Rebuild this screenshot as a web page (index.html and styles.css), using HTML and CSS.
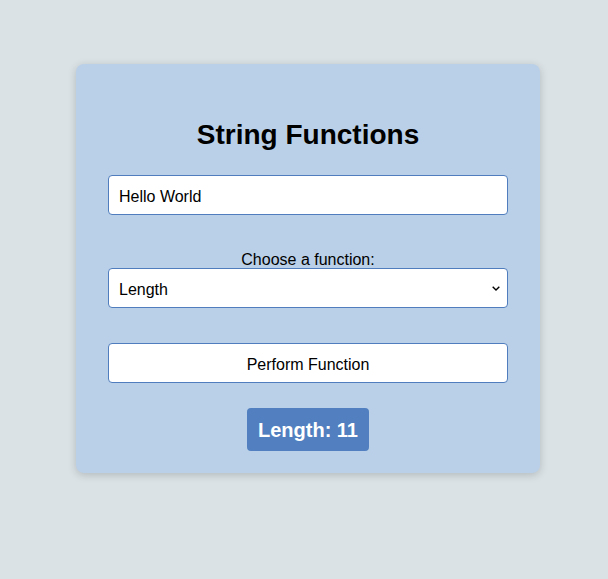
FILE: index.html
```html
<!DOCTYPE html>
<html>
<head>
<meta charset="utf-8">
<link rel="stylesheet" href="styles.css">
</head>
<body>
<div class="card">
  <h1 class="title">String Functions</h1>
  <input class="field" type="text" value="Hello World">
  <label class="label" for="fn">Choose a function:</label>
  <div class="select-wrap">
    <select class="field select" id="fn">
      <option>Length</option>
    </select>
    <svg class="chevron" width="8" height="5" viewBox="0 0 8 5"><path d="M0.7 0.7 L4 4 L7.3 0.7" fill="none" stroke="#000" stroke-width="1.4"/></svg>
  </div>
  <button class="field button">Perform Function</button>
  <div class="result">Length: 11</div>
</div>
</body>
</html>
```
FILE: styles.css
```css
html, body {
  margin: 0;
  background: #dae2e6;
}
body {
  padding: 64px 0 0 8px;
  height: 579px;
  box-sizing: border-box;
  font-family: "Liberation Sans", Arial, sans-serif;
}
.card {
  width: 464px;
  height: 409px;
  box-sizing: border-box;
  margin: 0 auto;
  background: #bad0e8;
  border-radius: 8px;
  box-shadow: 0 2px 8px rgba(0, 0, 0, 0.18);
  padding: 55px 32px 0;
  display: flex;
  flex-direction: column;
  align-items: center;
}
.title {
  margin: 0;
  font-size: 28px;
  line-height: 32px;
  font-weight: bold;
  color: #000;
}
.field {
  width: 400px;
  height: 40px;
  box-sizing: border-box;
  border: 1px solid #4f7dbd;
  border-radius: 4px;
  background: #fff;
  font-family: "Liberation Sans", Arial, sans-serif;
  font-size: 16px;
  color: #000;
  padding: 3px 10px 0;
  margin: 0;
}
input.field {
  margin-top: 24px;
}
.label {
  margin-top: 36px;
  font-size: 16px;
  line-height: 17px;
  color: #000;
}
.select-wrap {
  position: relative;
  width: 400px;
  height: 40px;
}
.select {
  appearance: none;
  -webkit-appearance: none;
  padding-left: 10px;
  outline: none;
}
.chevron {
  position: absolute;
  right: 8px;
  top: 18px;
  pointer-events: none;
}
.button {
  margin-top: 35px;
  text-align: center;
  cursor: pointer;
}
.result {
  margin-top: 25px;
  width: 122px;
  height: 43px;
  box-sizing: border-box;
  padding-top: 1px;
  background: #517fbf;
  border-radius: 4px;
  color: #fff;
  font-weight: bold;
  font-size: 20px;
  display: flex;
  align-items: center;
  justify-content: center;
}
```
